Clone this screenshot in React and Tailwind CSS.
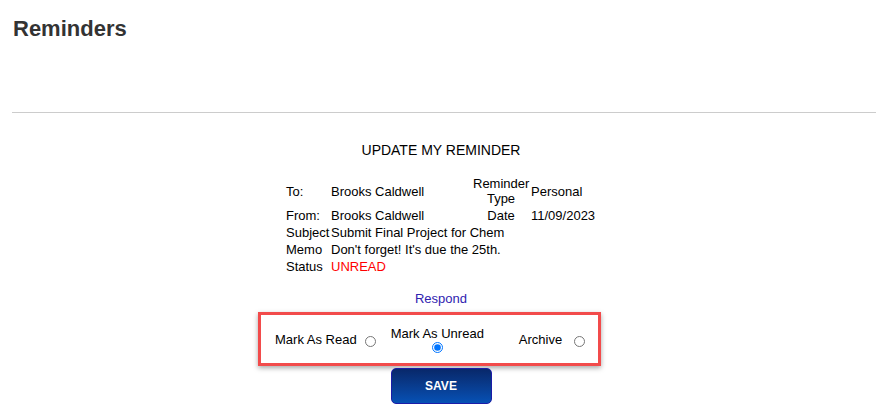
import React, { useState } from "react";

function Row({ label, children, extra, extraValue }) {
  return (
    <>
      <div className="px-px py-px">{label}</div>
      {extra ? (
        <>
          <div className="px-px py-px">{children}</div>
          <div className="px-px py-px text-center">{extra}</div>
          <div className="px-px py-px">{extraValue}</div>
        </>
      ) : (
        <div className="col-span-3 px-px py-px">{children}</div>
      )}
    </>
  );
}

function App() {
  const [status, setStatus] = useState("unread");

  return (
    <div className="min-h-screen bg-white font-['Liberation_Sans',Arial,sans-serif] text-black">
      <h1 className="pl-[13px] pt-[16px] text-[22px] font-bold leading-[25px] text-[#333333]">
        Reminders
      </h1>
      <div className="ml-[12px] mr-[14px] mt-[71px] h-px bg-[#cccccc]" />

      <div className="flex flex-col items-center pl-[12px] pr-[20px]">
        <h2 className="mt-[29px] text-[14px] leading-[16px]">UPDATE MY REMINDER</h2>

        <div className="mt-[17px] grid grid-cols-[45px_142px_58px_67px] items-center text-[13px] leading-[15px]">
          <Row
            label="To:"
            extra={
              <>
                Reminder
                <br />
                Type
              </>
            }
            extraValue="Personal"
          >
            Brooks Caldwell
          </Row>
          <Row label="From:" extra="Date" extraValue="11/09/2023">
            Brooks Caldwell
          </Row>
          <Row label="Subject">Submit Final Project for Chem</Row>
          <Row label="Memo">Don't forget! It's due the 25th.</Row>
          <Row label="Status">
            <span className="text-[#ff0000]">UNREAD</span>
          </Row>
        </div>

        <a href="#" className="mt-[16px] text-[13px] leading-[15px] text-[#2f23b0]">
          Respond
        </a>

        <div className="mr-[23px] mt-[6px] flex h-[54px] w-[343px] items-center border-[3px] border-[#f24b4b] pl-[14px] text-[13px] leading-[15px] shadow-[0_2px_5px_rgba(0,0,0,0.35)]">
          <span>Mark As Read</span>
          <input
            type="radio"
            name="status"
            checked={status === "read"}
            onChange={() => setStatus("read")}
            className="ml-[8px] mt-[5px] h-[11px] w-[11px]"
          />
          <div className="ml-[15px] flex flex-col items-center">
            <span>Mark As Unread</span>
            <input
              type="radio"
              name="status"
              checked={status === "unread"}
              onChange={() => setStatus("unread")}
              className="mt-[1px] h-[11px] w-[11px]"
            />
          </div>
          <span className="ml-[35px]">Archive</span>
          <input
            type="radio"
            name="status"
            checked={status === "archive"}
            onChange={() => setStatus("archive")}
            className="ml-[12px] mt-[5px] h-[11px] w-[11px]"
          />
        </div>

        <button className="mt-[2px] h-[36px] w-[101px] rounded-[5px] border border-[#1c1ca8] bg-linear-to-b from-[#08286a] to-[#0651b5] text-[12px] font-bold text-white">
          SAVE
        </button>
      </div>
    </div>
  );
}

export default App;
